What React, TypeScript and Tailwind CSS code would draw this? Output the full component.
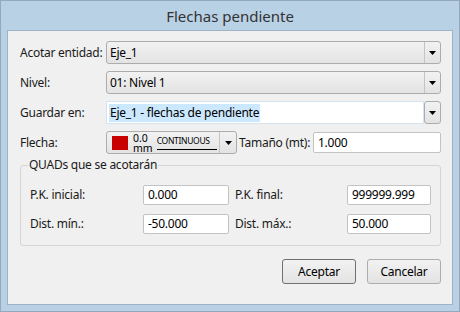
import React from "react";

const Arrow = () => (
  <svg width="7" height="4" viewBox="0 0 7 4" className="block">
    <path d="M0 0H7L3.5 4Z" fill="#000" />
  </svg>
);

const Combo = ({ text }: { text: string }) => (
  <div className="flex-1 h-[23px] flex border border-[#acacac] rounded-[3px] bg-gradient-to-b from-[#f2f2f2] to-[#e3e3e3]">
    <div className="flex-1 flex items-center pl-[3px] text-[#000]">{text}</div>
    <div className="w-[16px] flex items-center justify-center border-l border-[#c4c4c4]">
      <Arrow />
    </div>
  </div>
);

const Input = ({ value, w }: { value: string; w: string }) => (
  <div className={`${w} h-[20px] flex items-center pl-[4px] bg-white border border-[#c3c3c3] rounded-[2px] text-[#000]`}>
    {value}
  </div>
);

export default function App() {
  return (
    <div
      className="w-[460px] h-[312px] border border-[#94a9be] bg-[#b9d1e5] text-[12px] tracking-[-0.25px] text-[#1a1a1a] overflow-hidden whitespace-nowrap"
      style={{ fontFamily: '"Noto Sans", "Open Sans", sans-serif' }}
    >
      <div className="h-[29px] flex items-center justify-center text-[15px] tracking-normal text-[#333] pt-[1px]">
        Flechas pendiente
      </div>
      <div className="ml-[6px] w-[446px] h-[275px] border border-[#9fb3c8] bg-[#f0f0f0] pl-[12px] pr-[11px] pt-[10px] flex flex-col">
        <div className="flex items-center h-[23px]">
          <div className="w-[86px]">Acotar entidad:</div>
          <Combo text="Eje_1" />
        </div>
        <div className="flex items-center h-[23px] mt-[7px]">
          <div className="w-[86px]">Nivel:</div>
          <Combo text="01: Nivel 1" />
        </div>
        <div className="flex items-center h-[23px] mt-[7px]">
          <div className="w-[86px]">Guardar en:</div>
          <div className="flex-1 h-[23px] flex">
            <div className="flex-1 h-[23px] bg-white border border-[#d6e3f0] flex items-center pl-[2px]">
              <span className="bg-[#cce8ff] px-[1px] text-[#000]">Eje_1 - flechas de pendiente</span>
            </div>
            <div className="w-[17px] h-[23px] flex items-center justify-center border border-[#acacac] rounded-[3px] bg-gradient-to-b from-[#f2f2f2] to-[#e3e3e3]">
              <Arrow />
            </div>
          </div>
        </div>
        <div className="flex items-center h-[23px] mt-[7px]">
          <div className="w-[86px]">Flecha:</div>
          <div className="w-[131px] h-[23px] flex border border-[#acacac] rounded-[3px] bg-gradient-to-b from-[#f2f2f2] to-[#e3e3e3]">
            <div className="flex-1 flex items-center pl-[5px]">
              <div className="w-[16px] h-[14px] bg-[#c80000] shrink-0" />
              <div className="ml-[5px] text-[10.5px] leading-[10px] text-[#000] tracking-normal">
                0.0
                <br />
                mm
              </div>
              <div className="ml-[4px] flex flex-col items-start">
                <span className="text-[8.5px] leading-[10px] text-[#000] tracking-[-0.3px]">CONTINUOUS</span>
                <div className="h-[1px] bg-[#000] mt-[3px] w-[60px]" />
              </div>
            </div>
            <div className="w-[17px] flex items-center justify-center border-l border-[#c4c4c4]">
              <Arrow />
            </div>
          </div>
          <div className="ml-[2px] w-[74px]">Tamaño (mt):</div>
          <div className="flex-1 h-[21px] flex items-center pl-[4px] bg-white border border-[#c3c3c3] rounded-[2px] text-[#000]">
            1.000
          </div>
        </div>
        <div className="relative mt-[11px] h-[81px] border border-[#d5d5d5] rounded-[3px] pt-[19px] pl-[9px]">
          <div className="absolute -top-[9px] left-[7px] px-[1px] bg-[#f0f0f0] leading-[16px]">
            QUADs que se acotarán
          </div>
          <div className="flex items-center h-[20px]">
            <div className="w-[113px]">P.K. inicial:</div>
            <Input value="0.000" w="w-[86px]" />
            <div className="ml-[6px] w-[112px]">P.K. final:</div>
            <Input value="999999.999" w="w-[84px]" />
          </div>
          <div className="flex items-center h-[20px] mt-[9px]">
            <div className="w-[113px]">Dist. mín.:</div>
            <Input value="-50.000" w="w-[86px]" />
            <div className="ml-[6px] w-[112px]">Dist. máx.:</div>
            <Input value="50.000" w="w-[84px]" />
          </div>
        </div>
        <div className="flex justify-end mt-[13px] gap-[11px]">
          <div className="w-[74px] h-[25px] flex items-center justify-center border border-[#707070] rounded-[3px] bg-gradient-to-b from-[#f2f2f2] to-[#e3e3e3] text-[#000]">
            Aceptar
          </div>
          <div className="w-[74px] h-[25px] flex items-center justify-center border border-[#adadad] rounded-[3px] bg-gradient-to-b from-[#f2f2f2] to-[#e3e3e3] text-[#000]">
            Cancelar
          </div>
        </div>
      </div>
    </div>
  );
}
